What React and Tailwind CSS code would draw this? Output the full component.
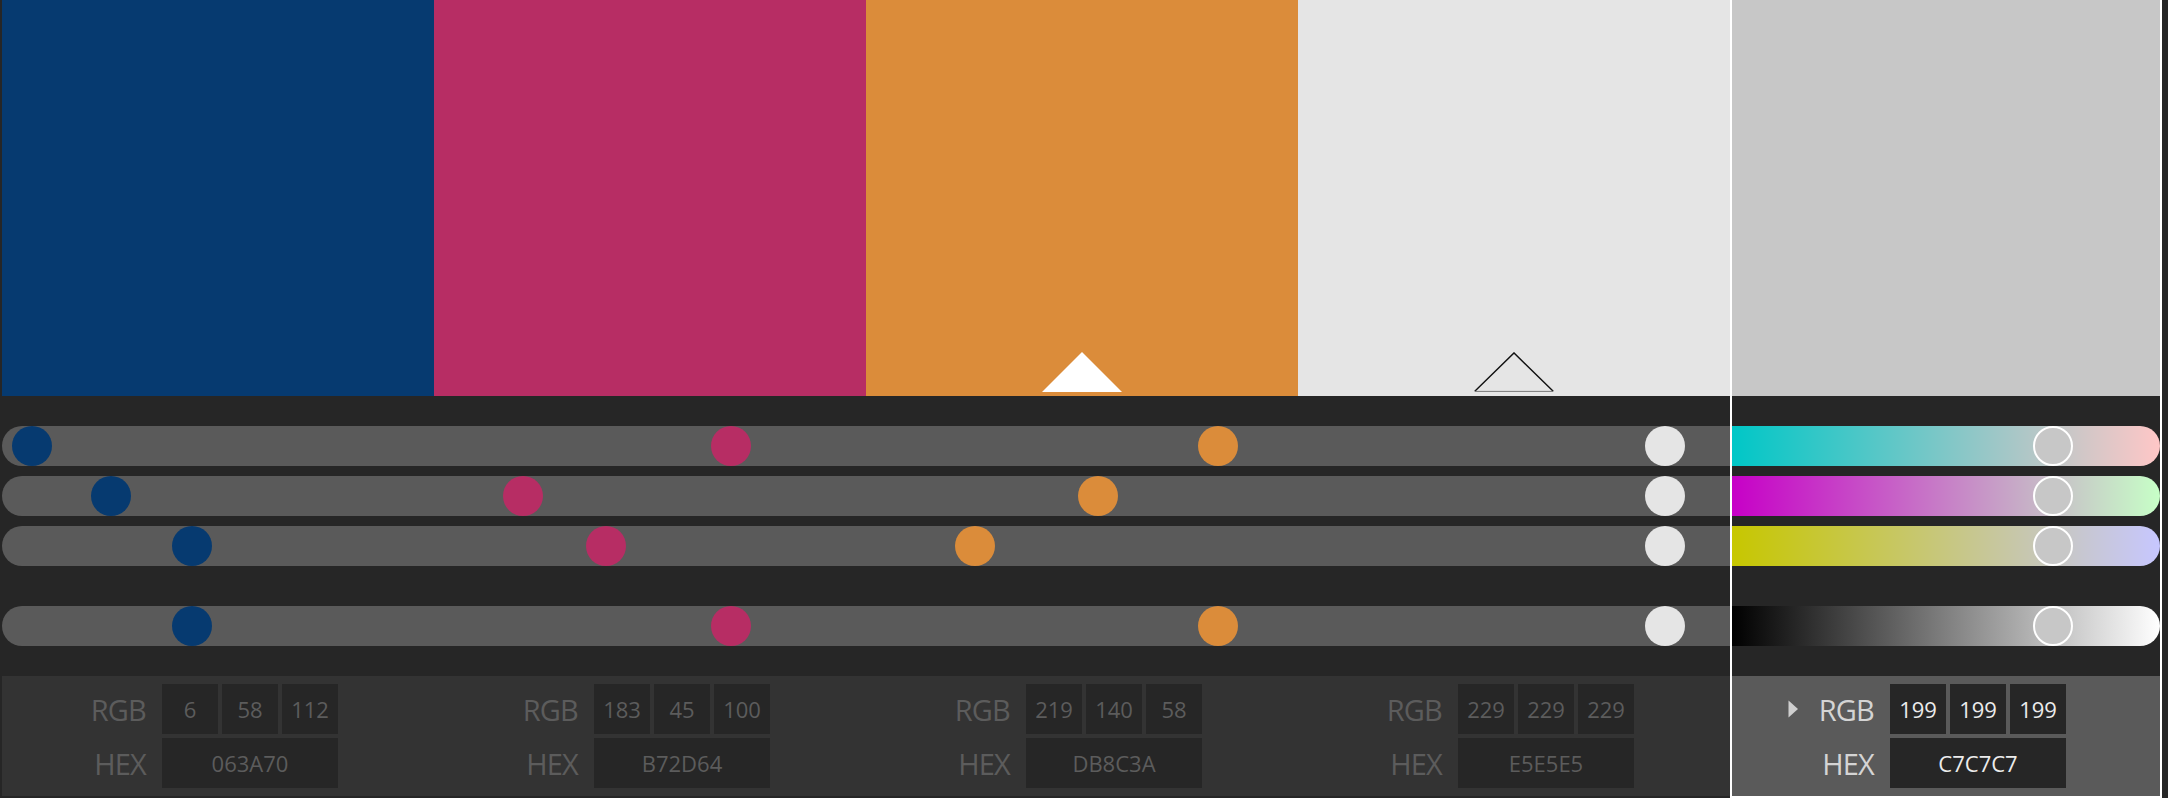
const swatches = [
  { hex: '063A70', rgb: [6, 58, 112] },
  { hex: 'B72D64', rgb: [183, 45, 100] },
  { hex: 'DB8C3A', rgb: [219, 140, 58] },
  { hex: 'E5E5E5', rgb: [229, 229, 229] },
]

const selected = { hex: 'C7C7C7', rgb: [199, 199, 199] }

// knob left offset inside a 432px column, value 0..255
const knobLeft = (v) => 1 + (v * 385) / 255

const font = { fontFamily: '"Open Sans", "Liberation Sans", sans-serif' }

function Knob({ value, color }) {
  return (
    <div
      className="absolute top-0 w-10 h-10 rounded-full"
      style={{ left: knobLeft(value), backgroundColor: '#' + color }}
    />
  )
}

function RingKnob({ value }) {
  return (
    <div
      className="absolute top-0 w-10 h-10 rounded-full border-2 border-white bg-[#c7c7c7]"
      style={{ left: knobLeft(value) }}
    />
  )
}

function Values({ hex, rgb, active }) {
  const label = active ? 'text-[#d4d4d4]' : 'text-[#5c5c5c]'
  const value = active ? 'text-[#ececec]' : 'text-[#5c5c5c]'
  return (
    <div className={`h-[120px] flex flex-col gap-1 pt-2 ${active ? 'bg-[#5a5a5a]' : 'bg-[#333333]'}`} style={font}>
      <div className="flex items-center h-[50px]">
        <div className={`${active ? 'w-[144px]' : 'w-[146px]'} flex items-center justify-end gap-[21px] pr-[2px]`}>
          {active && (
            <svg width="10" height="18" viewBox="0 0 10 18">
              <path d="M0.5 0.5 L10 9 L0.5 17.5 Z" fill="#cfcfcf" />
            </svg>
          )}
          <span className={`text-[29px] leading-none tracking-[-0.8px] ${label}`}>RGB</span>
        </div>
        <div className="ml-[14px] flex gap-1">
          {rgb.map((v, i) => (
            <div key={i} className={`w-14 h-[50px] bg-[#262626] flex items-center justify-center text-[22px] ${value}`}>
              {v}
            </div>
          ))}
        </div>
      </div>
      <div className="flex items-center h-[50px]">
        <div className={`${active ? 'w-[144px]' : 'w-[146px]'} flex justify-end pr-[2px]`}>
          <span className={`text-[29px] leading-none tracking-[-0.8px] ${label}`}>HEX</span>
        </div>
        <div className={`ml-[14px] w-[176px] h-[50px] bg-[#262626] flex items-center justify-center text-[22px] ${value}`}>
          {hex}
        </div>
      </div>
    </div>
  )
}

function Column({ hex, rgb, index }) {
  const max = Math.max(...rgb)
  const round = index === 0 ? 'rounded-l-full' : ''
  return (
    <div className="w-[432px] flex flex-col">
      <div className="h-[396px] flex items-end justify-center pb-1" style={{ backgroundColor: '#' + hex }}>
        {index === 2 && (
          <svg width="80" height="40" viewBox="0 0 80 40">
            <path d="M40 0 L80 40 L0 40 Z" fill="#ffffff" />
          </svg>
        )}
        {index === 3 && (
          <svg width="80" height="40" viewBox="0 0 80 40">
            <path d="M0.8 39.3 L40 0.9 L79.2 39.3" fill="none" stroke="#111111" strokeWidth="1.4" />
            <path d="M0.8 39.4 L79.2 39.4" stroke="#777777" strokeWidth="1" />
          </svg>
        )}
      </div>
      <div className="flex flex-col pt-[30px] pb-[30px]">
        {rgb.map((v, i) => (
          <div key={i} className={`relative h-10 bg-[#5a5a5a] ${round} ${i > 0 ? 'mt-[10px]' : ''}`}>
            <Knob value={v} color={hex} />
          </div>
        ))}
        <div className={`relative h-10 bg-[#5a5a5a] ${round} mt-10`}>
          <Knob value={max} color={hex} />
        </div>
      </div>
      <Values hex={hex} rgb={rgb} />
    </div>
  )
}

function SelectedColumn() {
  const tracks = [
    'bg-[linear-gradient(to_right,#00c7c7,#ffc7c7)]',
    'bg-[linear-gradient(to_right,#c700c7,#c7ffc7)]',
    'bg-[linear-gradient(to_right,#c7c700,#c7c7ff)]',
  ]
  return (
    <div className="w-[432px] flex flex-col border-x-2 border-b-2 border-white">
      <div className="h-[396px] bg-[#c7c7c7]" />
      <div className="flex flex-col pt-[30px] pb-[30px]">
        {tracks.map((t, i) => (
          <div key={i} className={`relative h-10 rounded-r-full ${t} ${i > 0 ? 'mt-[10px]' : ''}`}>
            <RingKnob value={selected.rgb[i]} />
          </div>
        ))}
        <div className="relative h-10 rounded-r-full mt-10 bg-[linear-gradient(to_right,#000000,#ffffff)]">
          <RingKnob value={199} />
        </div>
      </div>
      <Values hex={selected.hex} rgb={selected.rgb} active />
    </div>
  )
}

export default function App() {
  return (
    <div className="w-[2168px] h-[798px] bg-[#262626] pl-[2px] flex overflow-hidden">
      {swatches.map((s, i) => (
        <Column key={s.hex} hex={s.hex} rgb={s.rgb} index={i} />
      ))}
      <SelectedColumn />
    </div>
  )
}
